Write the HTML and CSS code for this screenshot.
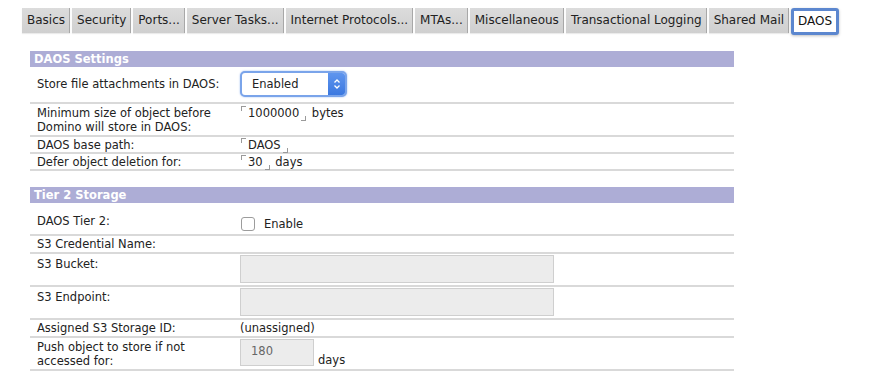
FILE: index.html
```html
<!DOCTYPE html>
<html lang="en">
<head>
    <meta charset="UTF-8">
    <title>Server Configuration - DAOS</title>
    <link rel="stylesheet" href="styles.css">
</head>
<body>

    <div class="tabs">
        <div class="tab">Basics</div>
        <div class="tab">Security</div>
        <div class="tab">Ports...</div>
        <div class="tab">Server Tasks...</div>
        <div class="tab">Internet Protocols...</div>
        <div class="tab">MTAs...</div>
        <div class="tab">Miscellaneous</div>
        <div class="tab">Transactional Logging</div>
        <div class="tab">Shared Mail</div>
        <div class="tab active">DAOS</div>
    </div>

    <div class="section first">
        <div class="section-head">DAOS Settings</div>
        <div class="row row-select">
            <div class="label">Store file attachments in DAOS:</div>
            <div class="value">
                <div class="select">
                    <span class="select-text">Enabled</span>
                    <span class="select-arrows">
                        <svg width="8" height="12" viewBox="0 0 8 12"><path d="M1.5 4.5 L4 2 L6.5 4.5 M1.5 7.5 L4 10 L6.5 7.5" fill="none" stroke="#fff" stroke-width="1.3"/></svg>
                    </span>
                </div>
            </div>
        </div>
        <div class="row row-two">
            <div class="label">Minimum size of object before<br>Domino will store in DAOS:</div>
            <div class="value"><span class="field"><span class="cl"></span>1000000<span class="cr"></span></span> bytes</div>
        </div>
        <div class="row">
            <div class="label">DAOS base path:</div>
            <div class="value"><span class="field"><span class="cl"></span>DAOS<span class="cr"></span></span></div>
        </div>
        <div class="row">
            <div class="label">Defer object deletion for:</div>
            <div class="value"><span class="field"><span class="cl"></span>30<span class="cr"></span></span> days</div>
        </div>
    </div>

    <div class="section">
        <div class="section-head">Tier 2 Storage</div>
        <div class="row row-check">
            <div class="label">DAOS Tier 2:</div>
            <div class="value"><span class="checkbox"></span>Enable</div>
        </div>
        <div class="row row-line">
            <div class="label">S3 Credential Name:</div>
            <div class="value"></div>
        </div>
        <div class="row row-tall">
            <div class="label">S3 Bucket:</div>
            <div class="value"><div class="textbox"></div></div>
        </div>
        <div class="row row-tall">
            <div class="label">S3 Endpoint:</div>
            <div class="value"><div class="textbox"></div></div>
        </div>
        <div class="row row-line">
            <div class="label">Assigned S3 Storage ID:</div>
            <div class="value">(unassigned)</div>
        </div>
        <div class="row row-push">
            <div class="label">Push object to store if not<br>accessed for:</div>
            <div class="value"><div class="numbox">180</div><span class="unit">days</span></div>
        </div>
    </div>

</body>
</html>
```

FILE: styles.css
```css
body {
    margin: 0;
    padding: 8px 0 0 0;
    font-family: "DejaVu Sans", Verdana, sans-serif;
    font-size: 11.5px;
    color: #222;
    background: white;
}
.tabs {
    display: flex;
    margin-left: 22px;
    gap: 2px;
}
.tab {
    height: 25px;
    line-height: 25px;
    padding: 0 4px 0 5px;
    background: linear-gradient(#dcdcdc, #cfcfcf);
    border-right: 1px solid #a8a8a8;
    box-shadow: 0 1px 1px rgba(0,0,0,0.08);
    font-size: 12px;
    color: #222;
}
.tab.active {
    background: white;
    border: 3px solid #5c87cf;
    border-radius: 3px;
    height: 21px;
    line-height: 21px;
    padding: 0 4px;
    color: #111;
    box-shadow: 0 1px 3px rgba(0,0,0,0.25);
}
.section {
    width: 704px;
    margin-left: 30px;
}
.section.first {
    margin-top: 16px;
}
.section + .section {
    margin-top: 16px;
}
.section-head {
    height: 16px;
    line-height: 16px;
    background: #adadd6;
    color: white;
    font-weight: bold;
    font-size: 11.5px;
    padding-left: 4px;
}
.row {
    display: grid;
    grid-template-columns: 210px 1fr;
    border-bottom: 2px solid #d9d9d9;
    min-height: 14px;
    padding-top: 1px;
}
.label {
    padding-left: 7px;
    line-height: 14px;
}
.value {
    line-height: 14px;
}
.row-line {
    min-height: 15px;
}
.row-select {
    height: 31px;
    padding-top: 4px;
}
.row-select .label {
    padding-top: 6px;
}
.row-two {
    height: 29px;
    padding-top: 2px;
}
.row-check {
    height: 29px;
    padding-top: 2px;
}
.row-check .label {
    padding-top: 9px;
}
.row-check .value {
    padding-top: 8px;
    display: flex;
    align-items: center;
}
.row-tall {
    height: 30px;
}
.row-tall .label {
    padding-top: 2px;
}
.row-push {
    height: 30px;
}
.row-push .label {
    padding-top: 1px;
}
.row-push .value {
    display: flex;
    align-items: flex-start;
}
.select {
    width: 103px;
    height: 22px;
    display: flex;
    border: 2px solid #7aa4ea;
    border-radius: 5px;
    box-shadow: 0 0 2px #9ab9ef;
    background: white;
    overflow: hidden;
}
.select-text {
    flex: 1;
    padding-left: 10px;
    line-height: 22px;
    font-size: 11.5px;
}
.select-arrows {
    width: 17px;
    background: linear-gradient(#5f95ee, #3b78e0);
    display: flex;
    align-items: center;
    justify-content: center;
}
.field {
    position: relative;
    padding: 0 9px 0 8px;
}
.cl, .cr {
    position: absolute;
    width: 4px;
    height: 4px;
    border-color: #9a9a9a;
    border-style: solid;
}
.cl {
    left: 1px;
    top: 0;
    border-width: 1px 0 0 1px;
}
.cr {
    right: 2px;
    bottom: -1px;
    border-width: 0 1px 1px 0;
}
.checkbox {
    width: 12px;
    height: 12px;
    border: 1px solid #9c9c9c;
    border-radius: 3px;
    margin-right: 9px;
    margin-left: 1px;
    background: white;
}
.textbox {
    width: 312px;
    height: 26px;
    background: #ececec;
    border: 1px solid #cfcfcf;
}
.numbox {
    width: 62px;
    height: 21px;
    padding: 4px 0 0 10px;
    line-height: 14px;
    color: #666;
    background: #ececec;
    border: 1px solid #cfcfcf;
}
.unit {
    margin-left: 4px;
    margin-top: 14px;
}
```
